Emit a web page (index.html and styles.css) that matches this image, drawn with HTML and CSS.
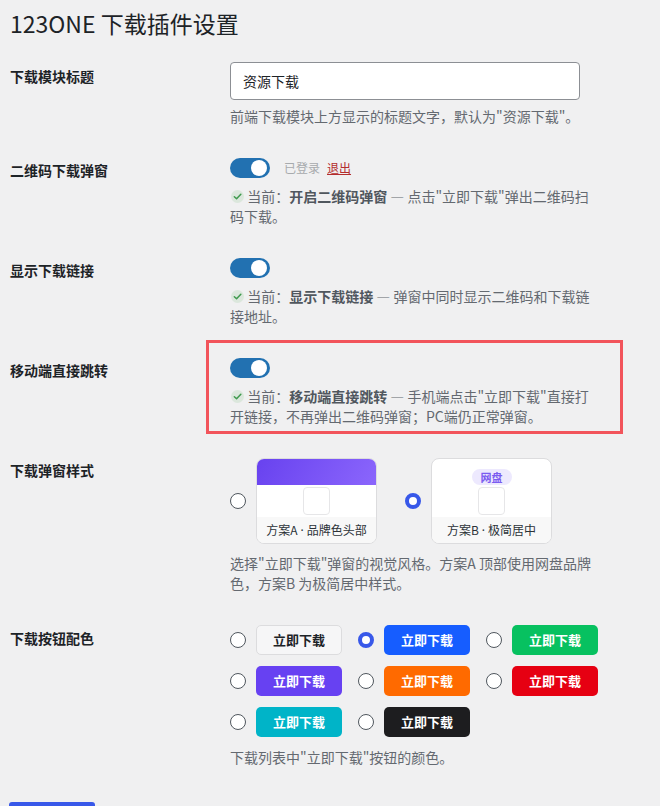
FILE: index.html
```html
<!DOCTYPE html>
<html lang="zh-CN">
<head>
<meta charset="utf-8">
<title>123ONE 下载插件设置</title>
<link rel="stylesheet" href="styles.css">
</head>
<body>
<div class="wrap">
  <h1 class="title">123ONE 下载插件设置</h1>

  <div class="form">
    <div class="row row-first">
      <div class="th">下载模块标题</div>
      <div class="td">
        <input class="text-input" type="text" value="资源下载">
        <p class="desc">前端下载模块上方显示的标题文字，默认为"资源下载"。</p>
      </div>
    </div>

    <div class="row">
      <div class="th">二维码下载弹窗</div>
      <div class="td">
        <div class="toggle-line">
          <span class="toggle"><span class="knob"></span></span>
          <span class="logged">已登录</span>
          <a class="logout" href="#">退出</a>
        </div>
        <p class="desc status"><svg class="check" viewBox="0 0 14 14" width="13" height="13"><circle cx="7" cy="7" r="7" fill="#dbe7dc"/><path d="M3.6 7.2 L6 9.5 L10.6 4.6" fill="none" stroke="#3f9a4e" stroke-width="1.6" stroke-linecap="round" stroke-linejoin="round"/></svg> 当前：<b>开启二维码弹窗</b> — 点击"立即下载"弹出二维码扫码下载。</p>
      </div>
    </div>

    <div class="row">
      <div class="th">显示下载链接</div>
      <div class="td">
        <div class="toggle-line">
          <span class="toggle"><span class="knob"></span></span>
        </div>
        <p class="desc status"><svg class="check" viewBox="0 0 14 14" width="13" height="13"><circle cx="7" cy="7" r="7" fill="#dbe7dc"/><path d="M3.6 7.2 L6 9.5 L10.6 4.6" fill="none" stroke="#3f9a4e" stroke-width="1.6" stroke-linecap="round" stroke-linejoin="round"/></svg> 当前：<b>显示下载链接</b> — 弹窗中同时显示二维码和下载链接地址。</p>
      </div>
    </div>

    <div class="row">
      <div class="th">移动端直接跳转</div>
      <div class="td highlight">
        <div class="toggle-line">
          <span class="toggle"><span class="knob"></span></span>
        </div>
        <p class="desc status"><svg class="check" viewBox="0 0 14 14" width="13" height="13"><circle cx="7" cy="7" r="7" fill="#dbe7dc"/><path d="M3.6 7.2 L6 9.5 L10.6 4.6" fill="none" stroke="#3f9a4e" stroke-width="1.6" stroke-linecap="round" stroke-linejoin="round"/></svg> 当前：<b>移动端直接跳转</b> — 手机端点击"立即下载"直接打开链接，不再弹出二维码弹窗；PC端仍正常弹窗。</p>
      </div>
    </div>

    <div class="row">
      <div class="th">下载弹窗样式</div>
      <div class="td">
        <div class="styles">
          <label class="style-opt">
            <span class="radio"></span>
            <span class="card">
              <span class="card-head"></span>
              <span class="card-body"><span class="qr"></span></span>
              <span class="card-foot">方案A<span class="dot">·</span>品牌色头部</span>
            </span>
          </label>
          <label class="style-opt">
            <span class="radio checked"></span>
            <span class="card">
              <span class="card-badge-area"><span class="badge">网盘</span></span>
              <span class="card-body body-b"><span class="qr"></span></span>
              <span class="card-foot">方案B<span class="dot">·</span>极简居中</span>
            </span>
          </label>
        </div>
        <p class="desc desc-styles">选择"立即下载"弹窗的视觉风格。方案A 顶部使用网盘品牌色，方案B 为极简居中样式。</p>
      </div>
    </div>

    <div class="row">
      <div class="th th-colors">下载按钮配色</div>
      <div class="td">
        <div class="colors">
          <label class="color-opt"><span class="radio"></span><span class="btn btn-light">立即下载</span></label>
          <label class="color-opt"><span class="radio checked"></span><span class="btn btn-blue">立即下载</span></label>
          <label class="color-opt"><span class="radio"></span><span class="btn btn-green">立即下载</span></label>
          <label class="color-opt"><span class="radio"></span><span class="btn btn-purple">立即下载</span></label>
          <label class="color-opt"><span class="radio"></span><span class="btn btn-orange">立即下载</span></label>
          <label class="color-opt"><span class="radio"></span><span class="btn btn-red">立即下载</span></label>
          <label class="color-opt"><span class="radio"></span><span class="btn btn-cyan">立即下载</span></label>
          <label class="color-opt"><span class="radio"></span><span class="btn btn-black">立即下载</span></label>
        </div>
        <p class="desc desc-colors">下载列表中"立即下载"按钮的颜色。</p>
      </div>
    </div>
  </div>

  <div class="submit-area"><button class="submit" type="button">保存更改</button></div>
</div>
</body>
</html>
```

FILE: styles.css
```css
* { box-sizing: border-box; }
html, body { margin: 0; padding: 0; }
body {
  background: #f0f0f1;
  color: #1d2327;
  font-family: "Noto Sans CJK SC", "Noto Sans", sans-serif;
  font-size: 14px;
  line-height: 20px;
  overflow: hidden;
}
.wrap { padding-left: 10px; }
.title {
  margin: 0;
  padding-top: 9px;
  font-size: 23px;
  line-height: 29px;
  font-weight: 400;
  color: #1d2327;
}
.form { padding-top: 8px; }
.row {
  display: grid;
  grid-template-columns: 220px 370px;
  padding: 16px 0;
}
.th {
  font-weight: 700;
  font-size: 14px;
  line-height: 20px;
  padding-top: 2px;
}
.row-first .th { padding-top: 4px; }
.th-colors { padding-top: 3px; }
.td { position: relative; }
.text-input {
  display: block;
  width: 350px;
  height: 38px;
  border: 1px solid #8c8f94;
  border-radius: 4px;
  background: #fff;
  padding: 0 12px;
  font: inherit;
  font-size: 14px;
  color: #1d2327;
}
.desc {
  margin: 0;
  color: #646970;
  font-size: 14px;
  line-height: 20px;
}
.row-first .desc { margin-top: 6px; }
.status { margin-top: 8px; }
.status b { color: #50575e; font-weight: 700; }
.check { vertical-align: -1px; margin-left: 1px; }
.toggle-line { display: flex; align-items: center; height: 20px; }
.toggle {
  width: 40px;
  height: 20px;
  border-radius: 10px;
  background: #2271b1;
  display: flex;
  align-items: center;
  justify-content: flex-end;
  padding-right: 3px;
}
.knob { width: 16px; height: 16px; border-radius: 50%; background: #fff; }
.logged { margin-left: 14px; font-size: 12px; color: #a7aaad; }
.logout { margin-left: 7px; font-size: 12px; color: #b32d2e; text-decoration: underline; }
.highlight::after {
  content: "";
  position: absolute;
  top: -18px;
  left: -24px;
  right: -23px;
  bottom: -8px;
  border: 3px solid #f2545b;
  pointer-events: none;
}
.styles { display: flex; align-items: center; gap: 28px; }
.style-opt { display: flex; align-items: center; gap: 10px; }
.radio {
  flex: none;
  width: 16px;
  height: 16px;
  border-radius: 50%;
  border: 1px solid #50575e;
  background: #fff;
}
.radio.checked { border: 4px solid #3858e9; }
.card {
  width: 121px;
  height: 86px;
  border: 1px solid #dcdcde;
  border-radius: 8px;
  background: #fff;
  overflow: hidden;
  display: flex;
  flex-direction: column;
}
.card-head {
  height: 26px;
  background: linear-gradient(120deg, #6842ef, #8b66fc);
  flex: none;
}
.card-badge-area { height: 26px; flex: none; display: flex; justify-content: center; align-items: flex-end; }
.badge {
  display: block;
  width: 40px;
  height: 16px;
  border-radius: 8px;
  background: #ede9fe;
  color: #7b5cf0;
  font-size: 11px;
  font-weight: 700;
  line-height: 16px;
  text-align: center;
}
.card-body { flex: 1; display: flex; justify-content: center; align-items: center; }
.qr {
  width: 27px;
  height: 28px;
  border: 1px solid #e6e6e8;
  border-radius: 4px;
  background: #fff;
}
.card-foot {
  height: 26px;
  flex: none;
  background: #f8f8f8;
  font-size: 12px;
  line-height: 26px;
  text-align: center;
  color: #2c3338;
}
.dot { font-family: "Noto Sans", "DejaVu Sans", sans-serif; padding: 0 3px; }
.desc-styles { margin-top: 9px; }
.colors {
  display: grid;
  grid-template-columns: repeat(3, 112px);
  column-gap: 16px;
  row-gap: 11px;
}
.color-opt { display: flex; align-items: center; gap: 10px; }
.btn {
  width: 86px;
  height: 30px;
  border-radius: 5px;
  font-size: 13px;
  font-weight: 700;
  line-height: 30px;
  text-align: center;
  color: #fff;
}
.btn-light { background: #f6f6f7; border: 1px solid #dcdcde; color: #1d2327; line-height: 28px; }
.btn-blue { background: #165dff; }
.btn-green { background: #07c160; }
.btn-purple { background: #6741f2; }
.btn-orange { background: #ff6a00; }
.btn-red { background: #e60012; }
.btn-cyan { background: #00b4c8; }
.btn-black { background: #1d1d1f; }
.desc-colors { margin-top: 10px; }
.submit-area { padding-top: 19px; }
.submit {
  margin-left: -1px;
  width: 86px;
  height: 32px;
  border: 0;
  border-radius: 3px;
  background: #3858e9;
  color: #fff;
  font: inherit;
  font-size: 13px;
}
```
